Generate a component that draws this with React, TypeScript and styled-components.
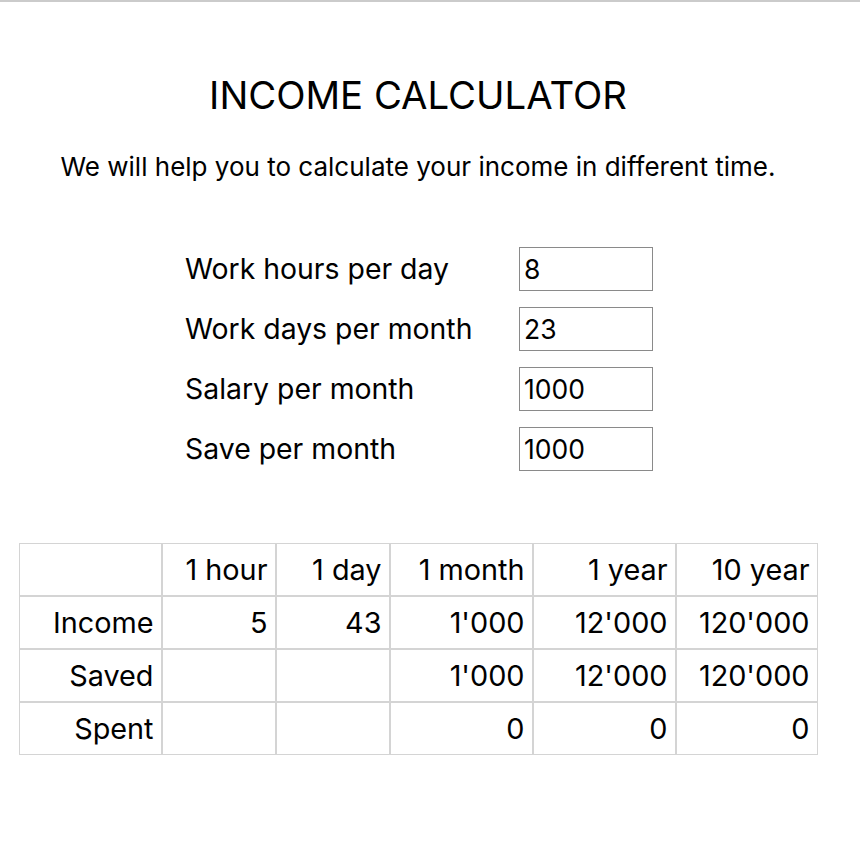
import React, { useState } from "react";
import styled, { createGlobalStyle } from "styled-components";

const GlobalStyle = createGlobalStyle`
  body {
    margin: 0;
    background: #fff;
    font-family: Inter, "Open Sans", sans-serif;
    color: #000;
  }
`;

const TopLine = styled.div`
  height: 2px;
  background: #cbcbcb;
`;

const Page = styled.main`
  width: 836px;
  display: flex;
  flex-direction: column;
  align-items: center;
`;

const Title = styled.h1`
  margin: 68px 0 0;
  font-size: 38.3px;
  font-weight: 400;
  line-height: 50px;
`;

const Subtitle = styled.p`
  margin: 29px 0 0;
  font-size: 26px;
  line-height: 36px;
`;

const Form = styled.div`
  margin-top: 62px;
  margin-left: 2px;
  display: grid;
  grid-template-columns: 334px 134px;
  row-gap: 16px;
  align-items: center;
`;

const FieldLabel = styled.label`
  font-size: 28.4px;
  line-height: 44px;
`;

const FieldInput = styled.input`
  box-sizing: border-box;
  width: 134px;
  height: 44px;
  border: 1px solid #8a8a8a;
  padding: 0 4px;
  font-family: Inter, "Open Sans", sans-serif;
  font-size: 26.5px;
  color: #000;
  outline: 0;
`;

const Table = styled.table`
  margin-top: 72px;
  border-spacing: 0;
  border-collapse: separate;
  font-size: 28.8px;
`;

const Cell = styled.td<{ $w?: number }>`
  box-sizing: border-box;
  width: ${(p) => (p.$w ? `${p.$w}px` : "auto")};
  height: 53px;
  border: 1px solid #d4d4d4;
  padding: 0 7px 0 0;
  text-align: right;
  white-space: nowrap;
`;

const fmt = (n: number): string =>
  n === 0 ? "0" : Math.round(n).toString().replace(/\B(?=(\d{3})+(?!\d))/g, "'");

export default function App(): JSX.Element {
  const [hours, setHours] = useState<string>("8");
  const [days, setDays] = useState<string>("23");
  const [salary, setSalary] = useState<string>("1000");
  const [save, setSave] = useState<string>("1000");

  const month = Number(salary) || 0;
  const saved = Number(save) || 0;
  const perDay = month / (Number(days) || 1);
  const perHour = perDay / (Number(hours) || 1);

  const widths = [143, 114, 114, 143, 143, 142];
  const heads = ["", "1 hour", "1 day", "1 month", "1 year", "10 year"];

  return (
    <>
      <GlobalStyle />
      <TopLine />
      <Page>
        <Title>INCOME CALCULATOR</Title>
        <Subtitle>We will help you to calculate your income in different time.</Subtitle>
        <Form>
          <FieldLabel htmlFor="hours">Work hours per day</FieldLabel>
          <FieldInput id="hours" value={hours} onChange={(e) => setHours(e.target.value)} />
          <FieldLabel htmlFor="days">Work days per month</FieldLabel>
          <FieldInput id="days" value={days} onChange={(e) => setDays(e.target.value)} />
          <FieldLabel htmlFor="salary">Salary per month</FieldLabel>
          <FieldInput id="salary" value={salary} onChange={(e) => setSalary(e.target.value)} />
          <FieldLabel htmlFor="save">Save per month</FieldLabel>
          <FieldInput id="save" value={save} onChange={(e) => setSave(e.target.value)} />
        </Form>
        <Table>
          <tbody>
            <tr>
              {heads.map((h, i) => (
                <Cell key={i} $w={widths[i]}>{h}</Cell>
              ))}
            </tr>
            <tr>
              <Cell>Income</Cell>
              <Cell>{fmt(perHour)}</Cell>
              <Cell>{fmt(perDay)}</Cell>
              <Cell>{fmt(month)}</Cell>
              <Cell>{fmt(month * 12)}</Cell>
              <Cell>{fmt(month * 120)}</Cell>
            </tr>
            <tr>
              <Cell>Saved</Cell>
              <Cell />
              <Cell />
              <Cell>{fmt(saved)}</Cell>
              <Cell>{fmt(saved * 12)}</Cell>
              <Cell>{fmt(saved * 120)}</Cell>
            </tr>
            <tr>
              <Cell>Spent</Cell>
              <Cell />
              <Cell />
              <Cell>{fmt(month - saved)}</Cell>
              <Cell>{fmt((month - saved) * 12)}</Cell>
              <Cell>{fmt((month - saved) * 120)}</Cell>
            </tr>
          </tbody>
        </Table>
      </Page>
    </>
  );
}
